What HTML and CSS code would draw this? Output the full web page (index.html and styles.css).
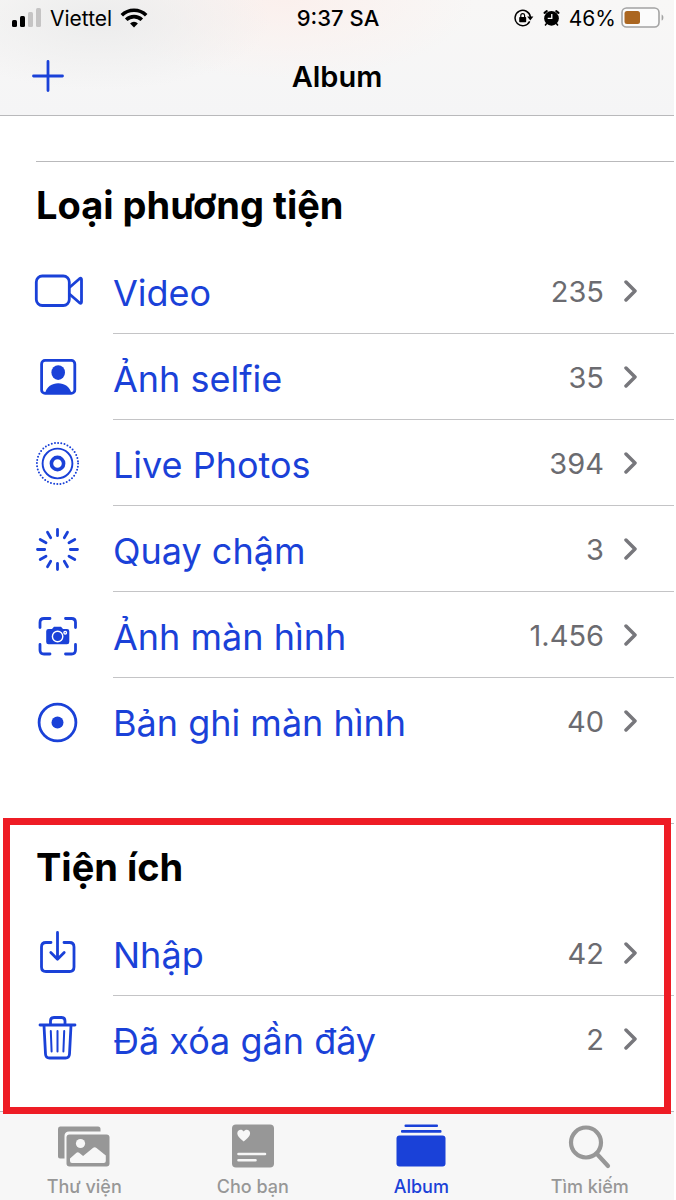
FILE: index.html
```html
<!DOCTYPE html>
<html lang="vi">
<head>
    <meta charset="UTF-8">
    <meta name="viewport" content="width=device-width, initial-scale=1">
    <title>Album</title>
    <link rel="stylesheet" href="styles.css">
</head>
<body>
    <header class="top">
        <div class="status">
            <div class="status-left">
                <svg class="signal" width="30" height="20" viewBox="0 0 30 20">
                    <rect x="0" y="12" width="5" height="7" rx="1.5"/>
                    <rect x="8" y="8" width="5" height="11" rx="1.5"/>
                    <rect x="16" y="4" width="5" height="15" rx="1.5" fill="#c5c4c4"/>
                    <rect x="24" y="0" width="5" height="19" rx="1.5" fill="#c5c4c4"/>
                </svg>
                <span>Viettel</span>
                <svg width="28" height="20" viewBox="0 0 28 20" fill="none" stroke="#000" stroke-width="3.6">
                    <path d="M1.8 7.2a17.4 17.4 0 0 1 24.4 0"/>
                    <path d="M6.2 11.8a11.2 11.2 0 0 1 15.6 0"/>
                    <path d="M14 19.4l-3.9-4a5.6 5.6 0 0 1 7.8 0z" fill="#000" stroke="none"/>
                </svg>
            </div>
            <div class="status-time">9:37 SA</div>
            <div class="status-right">
                <svg width="20" height="18" viewBox="0 0 20 18">
                    <path d="M15.7 12.4A7.7 7.7 0 1 1 16.4 8" fill="none" stroke="#000" stroke-width="1.5"/>
                    <path d="M13.2 7.4h6.2l-3.1 4z"/>
                    <rect x="5.2" y="8" width="7" height="5.2" rx="0.8"/>
                    <path d="M6.8 8.4V6.5a1.9 1.9 0 0 1 3.8 0v1.9" fill="none" stroke="#000" stroke-width="1.2"/>
                </svg>
                <svg class="alarm" width="17" height="18" viewBox="0 0 18 18">
                    <circle cx="9" cy="9.4" r="7.8"/>
                    <path d="M1.6 3.6L4 1.8M16.4 3.6L14 1.8" stroke="#000" stroke-width="2.2" stroke-linecap="round"/>
                    <path d="M4 14.6L2.2 17M14 14.6l1.8 2.4" stroke="#000" stroke-width="1.6"/>
                    <path d="M9.3 4.8v4.6H5" fill="none" stroke="#fff" stroke-width="1.4"/>
                </svg>
                <span>46%</span>
                <svg width="43" height="22" viewBox="0 0 43 22">
                    <rect x="1" y="1" width="37" height="19" rx="4.5" fill="#fbfbfb" stroke="#a3a3a3" stroke-width="1.6"/>
                    <rect x="3.5" y="4" width="15.5" height="13" rx="2.5" fill="#ab6620"/>
                    <path d="M40.6 7.4c2.4.8 2.4 5.4 0 6.2z" fill="#a3a3a3"/>
                </svg>
            </div>
        </div>
        <div class="navbar">
            <button class="add" type="button" aria-label="Thêm">
                <svg width="32" height="32" viewBox="0 0 32 32" stroke="#1a41d8" stroke-width="2.8" stroke-linecap="round">
                    <path d="M1.5 16h29M16 1.5v29"/>
                </svg>
            </button>
            <h1>Album</h1>
        </div>
    </header>

    <main>
        <section class="group">
            <h2>Loại phương tiện</h2>
            <ul class="rows">
                <li><a class="row" href="#video">
                    <svg class="icon" viewBox="0 0 52 52">
                        <rect x="4.3" y="11" width="33" height="29.5" rx="6"/>
                        <path d="M38 22l9.5-8.3q2-1.2 2 .8V37q0 2-2 .8L38 29.5"/>
                    </svg>
                    <span class="line"><span class="label">Video</span><span class="count">235</span>
                    <svg class="chevron" viewBox="0 0 14 24"><path d="M2 3l9 9-9 9"/></svg></span>
                </a></li>
                <li><a class="row" href="#selfie">
                    <svg class="icon" viewBox="0 0 52 52">
                        <rect x="9.6" y="9.4" width="33.2" height="33" rx="3.5"/>
                        <ellipse class="solid" cx="26.2" cy="21.6" rx="6.8" ry="7.4"/>
                        <path class="solid" d="M13 42.3c1.5-6.5 7-10 13.2-10s11.7 3.500 13.200 10z"/>
                    </svg>
                    <span class="line"><span class="label">Ảnh selfie</span><span class="count">35</span>
                    <svg class="chevron" viewBox="0 0 14 24"><path d="M2 3l9 9-9 9"/></svg></span>
                </a></li>
                <li><a class="row" href="#live">
                    <svg class="icon" viewBox="0 0 52 52">
                        <circle cx="25.5" cy="26.5" r="20.6" stroke-width="2" stroke-dasharray="0 3.236"/>
                        <circle cx="25.5" cy="26.5" r="14.9" stroke-width="1.9"/>
                        <circle cx="25.5" cy="26.5" r="6.1" stroke-width="3.6"/>
                    </svg>
                    <span class="line"><span class="label">Live Photos</span><span class="count">394</span>
                    <svg class="chevron" viewBox="0 0 14 24"><path d="M2 3l9 9-9 9"/></svg></span>
                </a></li>
                <li><a class="row" href="#slomo">
                    <svg class="icon" viewBox="0 0 52 52">
                        <path d="M25.5 6.5v6.2M25.5 40.3v6.2M5.5 26.5h7.2M38.3 26.5h7.2M15.5 9.2l3.2 5.5M32.3 38.3l3.2 5.5M35.5 9.2l-3.2 5.5M18.7 38.3l-3.2 5.5M8.2 16.5l5.8 3.3M37 33.2l5.8 3.3M42.8 16.5L37 19.8M14 33.2l-5.8 3.3"/>
                    </svg>
                    <span class="line"><span class="label">Quay chậm</span><span class="count">3</span>
                    <svg class="chevron" viewBox="0 0 14 24"><path d="M2 3l9 9-9 9"/></svg></span>
                </a></li>
                <li><a class="row" href="#screenshots">
                    <svg class="icon" viewBox="0 0 52 52">
                        <path d="M8 18.5v-5q0-4 4-4h6M33.500 9.500h6q4 0 4 4v5M43.500 35.500v5.500q0 4-4 4h-6M18 45h-6q-4 0-4-4v-5.500"/>
                        <path class="solid" d="M16.5 20H20l2-2.300h7l2 2.300h4q2.300 0 2.300 2.300V33q0 2.300-2.300 2.300H16.500q-2.300 0-2.300-2.300V22.300q0-2.300 2.300-2.300z"/>
                        <circle class="lens" cx="25.600" cy="27.500" r="5.200"/>
                        <circle class="lens" cx="33.200" cy="23.700" r="1.300"/>
                    </svg>
                    <span class="line"><span class="label">Ảnh màn hình</span><span class="count">1.456</span>
                    <svg class="chevron" viewBox="0 0 14 24"><path d="M2 3l9 9-9 9"/></svg></span>
                </a></li>
                <li><a class="row" href="#recordings">
                    <svg class="icon" viewBox="0 0 52 52">
                        <circle cx="25.5" cy="27.5" r="18.4"/>
                        <circle class="solid" cx="25.5" cy="27.5" r="6"/>
                    </svg>
                    <span class="line"><span class="label">Bản ghi màn hình</span><span class="count">40</span>
                    <svg class="chevron" viewBox="0 0 14 24"><path d="M2 3l9 9-9 9"/></svg></span>
                </a></li>
            </ul>
        </section>

        <section class="group marked">
            <h2>Tiện ích</h2>
            <ul class="rows">
                <li><a class="row" href="#imports">
                    <svg class="icon" viewBox="0 0 52 52">
                        <path d="M19 15.500h-5q-4.500 0-4.500 4.500v20q0 4.500 4.500 4.500h23.500q4.500 0 4.500-4.500V20q0-4.500-4.500-4.500H32M25.500 5.500V32M18.800 25.500l6.700 6.700 6.700-6.700"/>
                    </svg>
                    <span class="line"><span class="label">Nhập</span><span class="count">42</span>
                    <svg class="chevron" viewBox="0 0 14 24"><path d="M2 3l9 9-9 9"/></svg></span>
                </a></li>
                <li><a class="row" href="#deleted">
                    <svg class="icon" viewBox="0 0 52 52">
                        <path d="M8 12h35M18.500 12V8q0-3.500 3.500-3.500h7.500Q33 4.500 33 8v4M12 12.500L13.500 41q.2 4 4 4h16q3.800 0 4-4L39 12.500"/>
                        <path d="M18.800 18l.8 20.500M25.500 18v20.500M32.200 18l-.8 20.500" stroke-width="2"/>
                    </svg>
                    <span class="line"><span class="label">Đã xóa gần đây</span><span class="count">2</span>
                    <svg class="chevron" viewBox="0 0 14 24"><path d="M2 3l9 9-9 9"/></svg></span>
                </a></li>
            </ul>
        </section>
    </main>

    <nav class="tabs">
        <a class="tab" href="#library">
            <svg width="54" height="46" viewBox="0 0 54 46">
                <path d="M3 3.500h38q2.500 0 2.500 2.500v2.500H12q-4.500 0-4.500 4.500v22.500H3q-2 0-2-2V6q0-2.500 2-2.500z"/>
                <rect x="9.500" y="11.500" width="43" height="32" rx="3"/>
                <circle cx="23.500" cy="20.500" r="4.600" fill="#f7f7f7"/>
                <path d="M13 38v-2.500l6.500-5.800q1.300-1.100 2.600 0l4 3.300 9.800-8q1.800-1.500 3.600 0l9.300 7.500V38q0 2-2 2H15q-2 0-2-2z" fill="#f7f7f7"/>
            </svg>
            <span>Thư viện</span>
        </a>
        <a class="tab" href="#foryou">
            <svg width="54" height="46" viewBox="0 0 54 46">
                <rect x="6" y="1.500" width="42" height="43" rx="4"/>
                <path d="M17.700 18.500C14.500 16 11.300 13.200 11.300 10.300c0-4 4.600-4.900 6.400-1.800 1.800-3.100 6.400-2.200 6.400 1.800 0 2.900-3.200 5.700-6.400 8.200z" fill="#f7f7f7"/>
                <path d="M12.500 31h26.500M12.500 37.300h17" stroke="#f7f7f7" stroke-width="2.600" stroke-linecap="round"/>
            </svg>
            <span>Cho bạn</span>
        </a>
        <a class="tab active" href="#albums">
            <svg width="54" height="46" viewBox="0 0 54 46">
                <rect x="10.500" y="1.500" width="33.500" height="2.600" rx="1"/>
                <rect x="7" y="7" width="40.500" height="2.800" rx="1"/>
                <rect x="2.500" y="12.500" width="49" height="31" rx="3"/>
            </svg>
            <span>Album</span>
        </a>
        <a class="tab" href="#search">
            <svg width="54" height="46" viewBox="0 0 54 46" class="outline">
                <circle cx="23" cy="19.500" r="15"/>
                <path d="M34 31l11 12"/>
            </svg>
            <span>Tìm kiếm</span>
        </a>
    </nav>
</body>
</html>
```
FILE: styles.css
```css
* {
    box-sizing: border-box;
}
body {
    margin: 0;
    padding-right: 2px;
    min-height: 100vh;
    display: flex;
    flex-direction: column;
    background: #fff;
    color: #000;
    font-family: Inter, "Liberation Sans", sans-serif;
}
a {
    text-decoration: none;
}
h1, h2, ul {
    margin: 0;
    padding: 0;
}
svg {
    display: block;
    flex-shrink: 0;
}
/* Status bar and title */
.top {
    height: 116px;
    border-bottom: 1px solid #b9b9bb;
    background:
        radial-gradient(ellipse 170px 70px at 100px 20px, #ececec, rgba(236, 236, 236, 0)),
        radial-gradient(ellipse 190px 80px at 285px 0, #fbf0ed, rgba(251, 240, 237, 0)),
        linear-gradient(#f8f7f6, #f5f5f6);
}
.status {
    display: grid;
    grid-template-columns: 1fr auto 1fr;
    align-items: center;
    height: 36px;
    padding: 0 10px 0 12px;
    font-size: 21px;
}
.status-left, .status-right {
    display: flex;
    align-items: center;
}
.status-left {
    gap: 8px;
}
.status-time {
    font-size: 22px;
    font-weight: 500;
}
.status-right {
    justify-content: flex-end;
    gap: 5px;
}
.alarm {
    margin: 0 4px;
}
.navbar {
    display: grid;
    grid-template-columns: 1fr auto 1fr;
    align-items: center;
    height: 80px;
    padding: 0 32px;
}
.navbar h1 {
    font-size: 29px;
    font-weight: 600;
}
.add {
    justify-self: start;
    padding: 0;
    border: none;
    background: none;
    cursor: pointer;
}
/* Album lists */
main {
    flex: 1;
    padding-top: 45px;
}
.group {
    padding-bottom: 59px;
}
.group h2 {
    height: 87px;
    margin-left: 36px;
    border-top: 1px solid #b9b9bb;
    font-size: 38px;
    line-height: 86px;
    font-weight: 700;
}
.rows {
    list-style: none;
}
.row {
    display: flex;
    align-items: center;
    gap: 29px;
    padding-left: 32px;
    color: #1a41d8;
}
.icon {
    width: 52px;
    height: 52px;
    fill: none;
    stroke: #1a41d8;
    stroke-width: 2.8;
    stroke-linecap: round;
    stroke-linejoin: round;
}
.icon .solid {
    fill: #1a41d8;
    stroke: none;
}
.icon .lens {
    stroke: #fff;
    stroke-width: 1.4;
}
.line {
    flex: 1;
    display: flex;
    align-items: center;
    height: 86px;
    padding-right: 36px;
    border-bottom: 1px solid #c4c4c6;
}
.rows li:last-child .line {
    border-bottom-color: transparent;
}
.label {
    flex: 1;
    padding-top: 4px;
    font-size: 36px;
}
.count {
    padding-top: 2px;
    margin-right: 20px;
    font-size: 29px;
    color: #6b6b70;
}
.chevron {
    width: 14px;
    height: 24px;
    fill: none;
    stroke: #77777c;
    stroke-width: 3.5;
    stroke-linecap: round;
    stroke-linejoin: round;
}
/* Highlighted group, the frame lies over the tab bar edge */
.marked {
    position: relative;
    padding-bottom: 29px;
}
.marked::after {
    content: "";
    position: absolute;
    z-index: 1;
    top: -5px;
    right: 3px;
    bottom: -3px;
    left: 3px;
    border: 7px solid #ee1c25;
    pointer-events: none;
}
/* Bottom tab bar */
.tabs {
    display: grid;
    grid-template-columns: repeat(4, 1fr);
    height: 89px;
    padding-top: 11px;
    border-top: 1px solid #b9b9bb;
    background: #f7f7f7;
}
.tab {
    display: flex;
    flex-direction: column;
    align-items: center;
    gap: 8px;
    color: #979797;
    fill: #979797;
    font-size: 18px;
    line-height: 20px;
    font-weight: 500;
}
.tab.active {
    color: #1a41d8;
    fill: #1a41d8;
}
.outline {
    fill: none;
    stroke: #979797;
    stroke-width: 4.2;
    stroke-linecap: round;
}
```
